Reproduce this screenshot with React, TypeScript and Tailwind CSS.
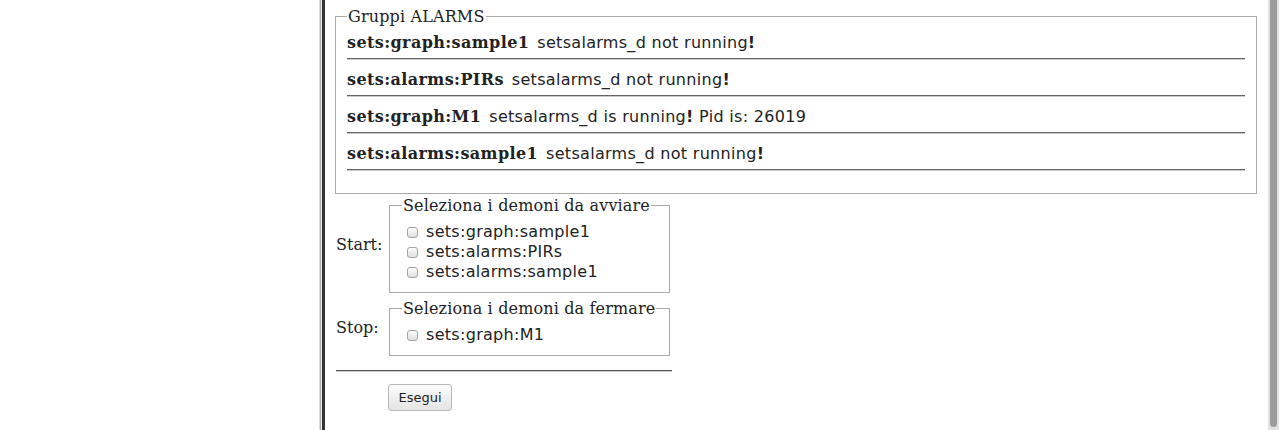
import React from 'react';

interface Group {
  name: string;
  status: string;
  pid?: string;
}

const groups: Group[] = [
  { name: 'sets:graph:sample1', status: 'not running' },
  { name: 'sets:alarms:PIRs', status: 'not running' },
  { name: 'sets:graph:M1', status: 'is running', pid: '26019' },
  { name: 'sets:alarms:sample1', status: 'not running' },
];

const toStart = ['sets:graph:sample1', 'sets:alarms:PIRs', 'sets:alarms:sample1'];
const toStop = ['sets:graph:M1'];

const serif = "font-['DejaVu_Serif',serif]";
const sans = "font-['DejaVu_Sans',sans-serif]";

function DaemonBox({ legend, items }: { legend: string; items: string[] }) {
  return (
    <fieldset className="w-[281px] border border-[#a9a9a9] pl-[12px] pt-[7px] pb-[10px]">
      <legend className={`px-[1px] text-[16px] leading-[19px] tracking-[0.15px] text-[#222] ${serif}`}>{legend}</legend>
      {items.map((item) => (
        <label key={item} className={`flex items-center h-[20px] text-[16px] tracking-[0.3px] text-[#222] ${sans}`}>
          <input
            type="checkbox"
            className="appearance-none ml-[5px] mr-[8px] w-[11px] h-[11px] border border-[#a5a5a5] rounded-[3px] bg-gradient-to-b from-[#fdfdfd] to-[#dedede]"
          />
          {item}
        </label>
      ))}
    </fieldset>
  );
}

export default function App() {
  return (
    <div className="flex h-[430px] bg-white overflow-hidden text-[#222]">
      <div className="w-[319px] shrink-0" />
      <div className="w-px shrink-0 bg-[#dcdcdc]" />
      <div className="w-px shrink-0 bg-[#ababab]" />
      <div className="w-px shrink-0 bg-[#ececec]" />
      <div className="w-[3px] shrink-0 bg-[#333]" />

      <div className="flex-1 min-w-0 pl-[10px] pr-[11px] pt-[7px]">
        <fieldset className="border border-[#a9a9a9] pl-[11px] pr-[11px] pt-[7px] pb-[12px]">
          <legend className={`px-[1px] text-[16px] leading-[19px] tracking-[0.15px] ${serif}`}>Gruppi ALARMS</legend>
          {groups.map((g) => (
            <div key={g.name}>
              <div className="text-[16px] leading-[19px] whitespace-nowrap">
                <b className={`font-bold tracking-[0.4px] ${serif}`}>{g.name}</b>
                <span className={`ml-[8px] tracking-[0.3px] ${sans}`}>
                  setsalarms_d {g.status}
                  <span className="font-bold">!</span>
                  {g.pid && <> Pid is: {g.pid}</>}
                </span>
              </div>
              <hr className="mt-[6px] mb-[10px] border-t border-t-[#666] border-b border-b-[#c8c8c8]" />
            </div>
          ))}
        </fieldset>

        <div className="w-[336px] ml-px mt-[2px] flex flex-col gap-[6px]">
          <div className="flex items-center">
            <div className={`w-[53px] text-[16px] ${serif}`}>Start:</div>
            <DaemonBox legend="Seleziona i demoni da avviare" items={toStart} />
          </div>
          <div className="flex items-center">
            <div className={`w-[53px] text-[16px] ${serif}`}>Stop:</div>
            <DaemonBox legend="Seleziona i demoni da fermare" items={toStop} />
          </div>
        </div>
        <hr className="w-[336px] ml-px mt-[14px] border-t border-t-[#555] border-b border-b-[#c8c8c8]" />
        <div className="ml-[53px] mt-[12px]">
          <button
            className={`w-[64px] h-[27px] border border-[#b8b8b8] rounded-[3px] bg-gradient-to-b from-[#fbfbfb] to-[#e4e4e4] text-[13px] text-[#222] ${sans}`}
          >
            Esegui
          </button>
        </div>
      </div>

      <div className="w-[11px] shrink-0 bg-[#e2e2e2] flex justify-center">
        <div className="w-[7px] h-[427px] bg-[#9c9c9c] rounded-b-[4px]" />
      </div>
    </div>
  );
}
